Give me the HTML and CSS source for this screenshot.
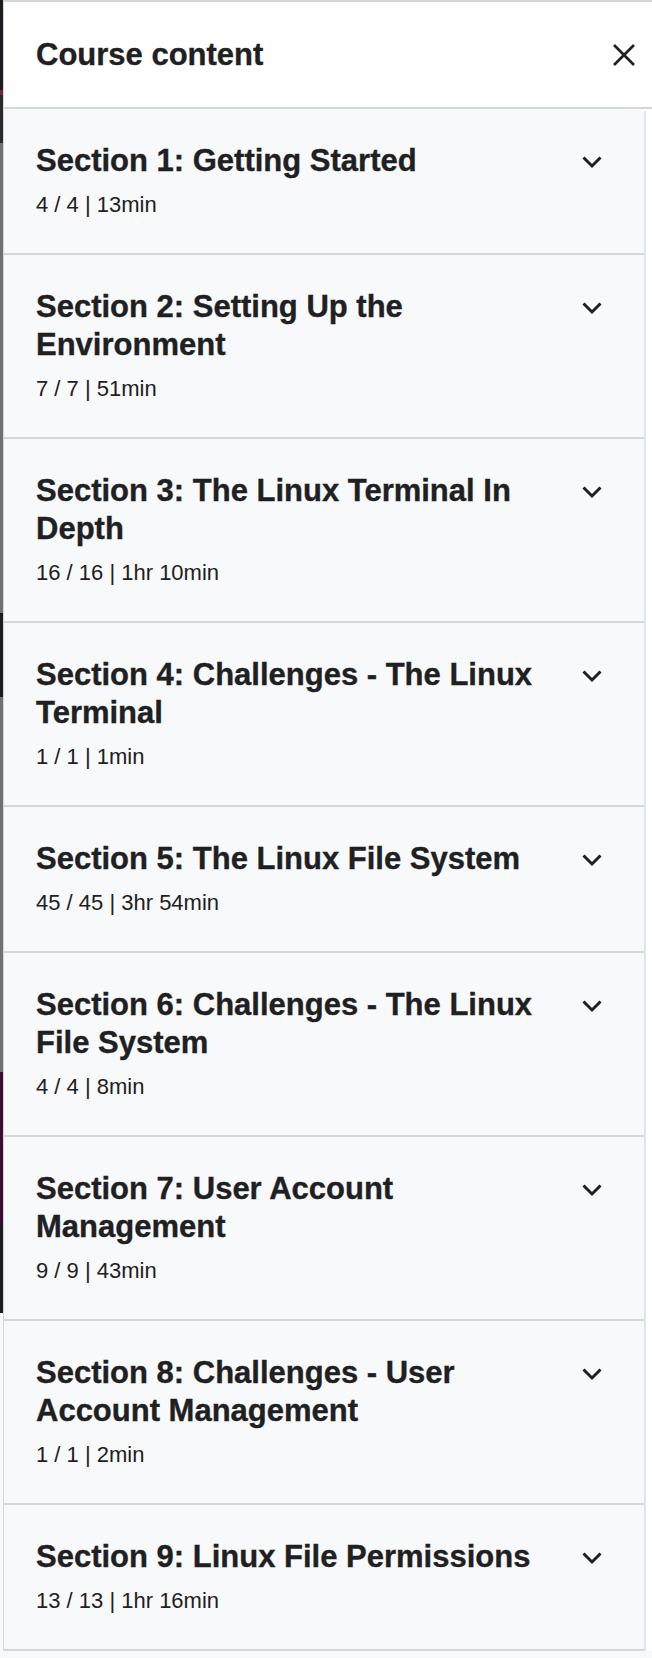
FILE: index.html
```html
<!DOCTYPE html>
<html lang="en">
<head>
<meta charset="utf-8">
<title>Course content</title>
<link rel="stylesheet" href="styles.css">
</head>
<body>
<div class="panel">
  <header class="header">
    <h2 class="header-title">Course content</h2>
    <button class="close" aria-label="Close">
      <svg width="24" height="24" viewBox="0 0 24 24"><path d="M2 2 L22 22 M22 2 L2 22" stroke="#1f2022" stroke-width="2.7" fill="none"/></svg>
    </button>
  </header>
  <div class="body">
    <div class="sections">
      <div class="section">
        <div class="sec-text">
          <div class="title">Section 1: Getting Started</div>
          <div class="meta">4 / 4 | 13min</div>
        </div>
        <svg class="chev" width="24" height="24" viewBox="0 0 24 24"><path d="M3.5 8.5 L12 17 L20.5 8.5" stroke="#1f2022" stroke-width="3" fill="none"/></svg>
      </div>
      <div class="section">
        <div class="sec-text">
          <div class="title">Section 2: Setting Up the Environment</div>
          <div class="meta">7 / 7 | 51min</div>
        </div>
        <svg class="chev" width="24" height="24" viewBox="0 0 24 24"><path d="M3.5 8.5 L12 17 L20.5 8.5" stroke="#1f2022" stroke-width="3" fill="none"/></svg>
      </div>
      <div class="section">
        <div class="sec-text">
          <div class="title">Section 3: The Linux Terminal In Depth</div>
          <div class="meta">16 / 16 | 1hr 10min</div>
        </div>
        <svg class="chev" width="24" height="24" viewBox="0 0 24 24"><path d="M3.5 8.5 L12 17 L20.5 8.5" stroke="#1f2022" stroke-width="3" fill="none"/></svg>
      </div>
      <div class="section">
        <div class="sec-text">
          <div class="title">Section 4: Challenges - The Linux Terminal</div>
          <div class="meta">1 / 1 | 1min</div>
        </div>
        <svg class="chev" width="24" height="24" viewBox="0 0 24 24"><path d="M3.5 8.5 L12 17 L20.5 8.5" stroke="#1f2022" stroke-width="3" fill="none"/></svg>
      </div>
      <div class="section">
        <div class="sec-text">
          <div class="title">Section 5: The Linux File System</div>
          <div class="meta">45 / 45 | 3hr 54min</div>
        </div>
        <svg class="chev" width="24" height="24" viewBox="0 0 24 24"><path d="M3.5 8.5 L12 17 L20.5 8.5" stroke="#1f2022" stroke-width="3" fill="none"/></svg>
      </div>
      <div class="section">
        <div class="sec-text">
          <div class="title">Section 6: Challenges - The Linux File System</div>
          <div class="meta">4 / 4 | 8min</div>
        </div>
        <svg class="chev" width="24" height="24" viewBox="0 0 24 24"><path d="M3.5 8.5 L12 17 L20.5 8.5" stroke="#1f2022" stroke-width="3" fill="none"/></svg>
      </div>
      <div class="section">
        <div class="sec-text">
          <div class="title">Section 7: User Account Management</div>
          <div class="meta">9 / 9 | 43min</div>
        </div>
        <svg class="chev" width="24" height="24" viewBox="0 0 24 24"><path d="M3.5 8.5 L12 17 L20.5 8.5" stroke="#1f2022" stroke-width="3" fill="none"/></svg>
      </div>
      <div class="section">
        <div class="sec-text">
          <div class="title">Section 8: Challenges - User Account Management</div>
          <div class="meta">1 / 1 | 2min</div>
        </div>
        <svg class="chev" width="24" height="24" viewBox="0 0 24 24"><path d="M3.5 8.5 L12 17 L20.5 8.5" stroke="#1f2022" stroke-width="3" fill="none"/></svg>
      </div>
      <div class="section">
        <div class="sec-text">
          <div class="title">Section 9: Linux File Permissions</div>
          <div class="meta">13 / 13 | 1hr 16min</div>
        </div>
        <svg class="chev" width="24" height="24" viewBox="0 0 24 24"><path d="M3.5 8.5 L12 17 L20.5 8.5" stroke="#1f2022" stroke-width="3" fill="none"/></svg>
      </div>
    </div>
    <div class="scrollbar"></div>
  </div>
</div>
</body>
</html>
```

FILE: styles.css
```css
html, body {
  margin: 0;
  padding: 0;
}

body {
  font-family: "Liberation Sans", Arial, sans-serif;
  color: #1f2022;
  background:
    linear-gradient(to bottom,
      #1c1d1f 0 90px,
      #7a2230 90px 95px,
      #2a2b2d 95px 143px,
      #6f7174 143px 613px,
      #1c1d1f 613px 697px,
      #6f7174 697px 1072px,
      #3e0b33 1072px 1225px,
      #1c1d1f 1225px 1313px) 0 0 / 3px 1313px no-repeat,
    #f7f9fa;
  min-height: 1658px;
}

.panel {
  margin-left: 3px;
  border-left: 1px solid #d1d7dc;
  border-top: 2px solid #d1d7dc;
}

.header {
  background: #fff;
  height: 105px;
  display: flex;
  align-items: center;
  justify-content: space-between;
  padding: 0 16px 0 32px;
  border-bottom: 2px solid #d1d7dc;
}

.header-title {
  margin: 0;
  font-size: 31px;
  line-height: 38px;
  font-weight: 700;
  -webkit-text-stroke: 0.35px #1f2022;
}

.close {
  border: 0;
  background: none;
  padding: 0;
  width: 24px;
  height: 24px;
  display: flex;
}

.body {
  display: flex;
  background: #fff;
}

.sections {
  flex: 1;
  background: #f7f9fa;
}

.scrollbar {
  width: 2px;
  background: #e3e6e9;
  margin: 2px 6px 0 0;
}

.section {
  display: flex;
  align-items: flex-start;
  padding: 33px 40px 33px 32px;
  border-bottom: 2px solid #d1d7dc;
}

.sec-text {
  flex: 1;
}

.title {
  font-size: 31px;
  line-height: 38px;
  font-weight: 700;
  -webkit-text-stroke: 0.35px #1f2022;
}

.meta {
  margin-top: 10px;
  font-size: 22px;
  line-height: 30px;
}

.chev {
  flex: none;
  margin: 7px 0 0 16px;
}
```
